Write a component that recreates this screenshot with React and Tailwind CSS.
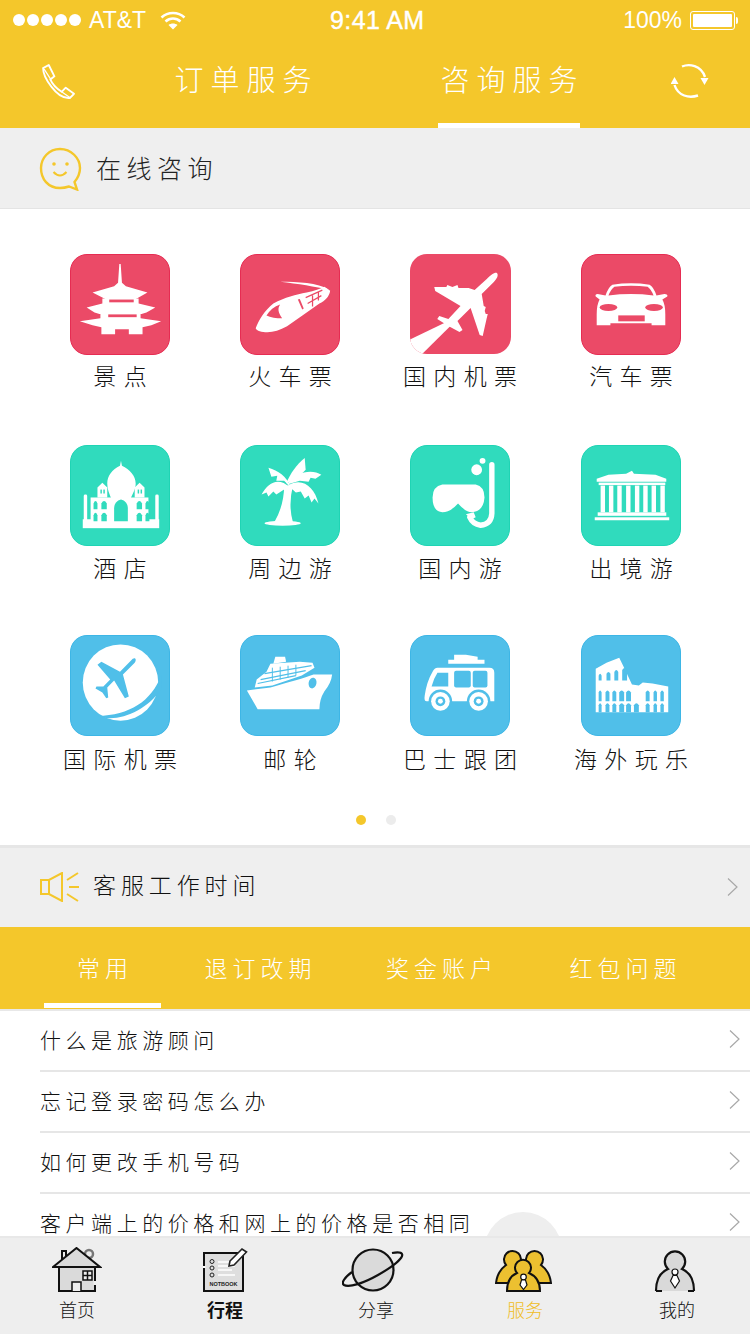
const FONT = '"Noto Sans CJK SC","Liberation Sans",sans-serif';

const Pagoda = () => (
  <g fill="#fff">
    <path d="M49.3 9h1.4L52 28l4 3.5L78 38l-9 5-3 1.5H35L32 43l-10-5 22-6.5 4-3.5z" />
    <path d="M32 44h37v5l17 4-9 5-5 1.5H29L24 58l-8-5 16-4z" />
    <path d="M30 59h41v5l21 3-10 4-9 2v7H59v-5H45v5H31v-7l-9-2-13-4 21-3z" />
    <rect x="39" y="45" width="25" height="2.8" fill="#eb4a67" />
    <rect x="38" y="60" width="29" height="2.8" fill="#eb4a67" />
  </g>
);
const Train = () => (
  <g>
    <path d="M15 74C18 66 24 56 33 49 45 43 56 40 67 38 75 36 81 34 85 32L91 36C90 42 86 46 80 49L67 58 47 72C40 76 33 78 27 78 21 78 16 77 15 74z" fill="#fff" />
    <path d="M40 27C58 27 78 28 90 35 76 32 58 29 40 27z" fill="#fff" />
    <path d="M26 61C29 56 34 52 40 50 37 54 38 58 42 64 36 64 30 63 26 61z" fill="#eb4a67" />
    <path d="M58 45L60 44.500 64 54 62.500 55z" fill="#eb4a67" />
    <path d="M66 43L83 35.500M68 49L82 41M73 41V52M79 38V46" stroke="#eb4a67" strokeWidth="1.300" fill="none" />
  </g>
);
const Plane = () => (
  <g fill="#fff">
    <path d="M-1 86L36 68 40 72 11 101H-1z" />
    <path d="M86 19C88 21 86 25 83 28L71 40 73 52 75 53 74 57 75 60 77 60 76 64 72 82 69 81 60 54 47 67 52 76 49 78 38 72 27 65 29 62 38 65 50 52 25 37 24 33 36 33 37 31 42 33 47 31 48 34 58 34 64 36 76 25C80 21 84 18 86 19z" />
  </g>
);
const Car = () => (
  <g>
    <path d="M31 30Q50 27 69 30Q73 32 76 41L84 39.500Q88 40 87 42L82 45Q85 50 85 60V71H71V69H29V71H15V60Q15 50 18 45L14 42Q13 40 16 39.500L24 41Q27 32 31 30Z" fill="#fff" />
    <path d="M33 32Q50 30 67 32Q71 35 73 41Q50 38 27 41Q29 35 33 32Z" fill="#eb4a67" />
    <ellipse cx="27" cy="53" rx="9" ry="3.500" fill="#eb4a67" />
    <ellipse cx="73.500" cy="53" rx="9" ry="3.500" fill="#eb4a67" />
    <rect x="37" y="61" width="27" height="6" fill="#eb4a67" />
  </g>
);
const Taj = () => {
  const T = '#30dbbd';
  return (
    <g>
      <g fill="#fff">
        <rect x="12" y="74" width="78" height="9" />
        <rect x="20" y="52" width="59" height="24" />
        <rect x="13" y="49" width="3.500" height="28" rx="1.500" />
        <rect x="86" y="49" width="3.500" height="28" rx="1.500" />
        <path d="M51 15L52 20C60 24 66 30 66 38 66 44 63 48 61 53H41C39 48 37 44 37 38 37 30 42 24 50 20z" />
        <path d="M32 37L37 42 37 52H27V42z" />
        <path d="M70 37L75 42 75 52H65V42z" />
      </g>
      <path d="M44 76V63C44 58 47 55 51 54 55 55 58 58 58 63V76z" fill={T} />
      {[
        [23, 4],
        [31, 5.500],
        [67, 5.500],
        [76, 4],
      ].map(([x, w]) => (
        <g key={x} fill={T}>
          <path d={`M${x} 64V58Q${x + w / 2} 53 ${x + w} 58V64z`} />
          <path d={`M${x} 76V70Q${x + w / 2} 65 ${x + w} 70V76z`} />
        </g>
      ))}
      <rect x="30" y="44" width="1.500" height="4" fill={T} />
      <rect x="33" y="44" width="1.500" height="4" fill={T} />
      <rect x="68" y="44" width="1.500" height="4" fill={T} />
      <rect x="71" y="44" width="1.500" height="4" fill={T} />
    </g>
  );
};
const Palm = () => (
  <g fill="#fff">
    <ellipse cx="42.500" cy="78" rx="18.500" ry="2.500" />
    <path d="M44 40Q44 60 34 77H53Q48 60 53 40z" />
    <path d="M50 42C38 31 28 37 21 49L26 47 28 51 33 46 36 49 44 44z" />
    <path d="M51 42C46 30 38 25 28 22L31 31 37 30 36 35 44 35z" />
    <path d="M46 38C50 28 57 18 65 12L66 24 58 32z" />
    <path d="M47 39C56 26 72 23 82 29L76 33 71 32 69 36 60 35z" />
    <path d="M48 40C62 31 75 41 79 58L75 53 72 57 69 50 65 53 61 46 56 47z" />
  </g>
);
const Snorkel = () => (
  <g>
    <path d="M32 39H66Q75 41 75 52 74 66 62 67 56 67 48 58 40 67 32 67 22 66 22 52 22 41 32 39Z" fill="#fff" />
    <path d="M82.500 19V68Q82 79 71 80 63 79 60 72" fill="none" stroke="#fff" strokeWidth="5.500" strokeLinecap="round" />
    <circle cx="67" cy="24" r="5.500" fill="#fff" />
    <circle cx="73" cy="15" r="3" fill="#fff" />
    <path d="M56 69L64 67 66 72 62 74z" fill="#fff" />
  </g>
);
const Parthenon = () => (
  <g fill="#fff">
    <path d="M15 33L27 29 45 28 51 25 53 28 75 29 86 33V36H15z" />
    <rect x="17" y="37" width="68" height="2.500" />
    {[19, 27.500, 36, 45, 54, 62.500, 71, 80].map((x) => (
      <rect key={x} x={x} y="40" width="4.500" height="27" />
    ))}
    <rect x="16" y="67" width="70" height="3.500" />
    <rect x="13" y="72" width="76" height="3" />
  </g>
);
const Globe = () => {
  const B = '#50bfe9';
  return (
    <g>
      <circle cx="50.500" cy="47" r="38.500" fill="#fff" />
      <path d="M92 40C82 66 60 80 27 81 48 88 76 76 92 54z" fill={B} />
      <path d="M63 23C66 21 67 24 65 27L53 39 59 61 55 63 44 45 37 52 38 62 36 63 32 57 25 53 26 51 33 51 40 44 27 29 31 26 50 36z" fill={B} />
    </g>
  );
};
const Ship = () => {
  const B = '#50bfe9';
  return (
    <g>
      <path d="M33 28L35 21H45L46 26z" fill="#fff" />
      <path d="M16 44L26 36 30 28 60 26 73 27 75 32 62 40 32 50 14 52z" fill="#fff" />
      <path d="M6 55L30 52Q60 44 74 39L93 39Q92 48 85 56 80 64 80 74H17z" fill="#fff" />
      <path d="M24 38L72 30M20 44L66 35M17 48L56 40" stroke={B} strokeWidth="1.200" fill="none" />
      <path d="M32 32V46M40 31V44M48 30V42M56 29V40" stroke={B} strokeWidth="1" fill="none" />
      <ellipse cx="73" cy="47.500" rx="4" ry="5.500" fill={B} transform="rotate(12 73 47.500)" />
    </g>
  );
};
const Bus = () => {
  const B = '#50bfe9';
  return (
    <g>
      <path d="M44 19H56L68 21V24H75V28H38V24H44z" fill="#fff" />
      <path d="M27 32H80Q85 32 85 37V66H16Q13 66 14 60 16 46 22 36 24 32 27 32z" fill="#fff" />
      <path d="M27 37H38V51H21Q23 43 27 37z" fill={B} />
      <rect x="44" y="35" width="17" height="17" rx="2" fill={B} />
      <rect x="63" y="35" width="15" height="17" rx="2" fill={B} />
      {[30, 69].map((x) => (
        <g key={x}>
          <circle cx={x} cy="66" r="12" fill={B} />
          <circle cx={x} cy="66" r="9.500" fill="#fff" />
          <circle cx={x} cy="66" r="5" fill={B} />
          <circle cx={x} cy="66" r="2.500" fill="#fff" />
        </g>
      ))}
    </g>
  );
};
const Colosseum = () => {
  const B = '#50bfe9';
  const rows = [
    [[17, 3], [25, 4], [33, 4], [41, 5]],
    [[17, 3], [24, 4], [31, 4], [38, 5], [45, 5], [65, 4], [73, 3.500], [80, 3.500]],
    [[17, 3], [24, 4], [31, 4], [38, 5], [45, 5], [53, 5], [65, 4], [73, 3.500], [80, 3.500]],
  ];
  const ys = [[45, 34], [66, 55], [77, 68]];
  return (
    <g>
      <path d="M14 33L25 27 38 22 42 30 51 49 58 50 62 47 72 48 88 51V77H14z" fill="#fff" />
      {rows.map((r, i) =>
        r.map(([x, w]) => {
          const [b, t] = ys[i];
          const top = i === 0 ? t + (46 - x) * 0.25 - 3 : t;
          return <path key={`${i}-${x}`} d={`M${x} ${b}V${top + 2}Q${x + w / 2} ${top - 2} ${x + w} ${top + 2}V${b}z`} fill={B} />;
        }),
      )}
    </g>
  );
};

const GROUPS = [
  {
    box: 'bg-[#eb4a67] border-[#e62c52]',
    label: 'mt-[5px]',
    items: [
      ['景点', Pagoda],
      ['火车票', Train],
      ['国内机票', Plane, true],
      ['汽车票', Car],
    ],
  },
  {
    box: 'bg-[#30dbbd] border-[#1fd4b4]',
    label: 'mt-[6px]',
    items: [
      ['酒店', Taj],
      ['周边游', Palm],
      ['国内游', Snorkel],
      ['出境游', Parthenon],
    ],
  },
  {
    box: 'bg-[#50bfe9] border-[#3db6e6]',
    label: 'mt-[7px]',
    items: [
      ['国际机票', Globe],
      ['邮轮', Ship],
      ['巴士跟团', Bus],
      ['海外玩乐', Colosseum],
    ],
  },
];

const Chevron = ({ className }) => (
  <svg className={className} width="13" height="20" viewBox="0 0 13 20" fill="none">
    <path d="M2 1.500L11 10 2 18.500" stroke="#a8a8a8" strokeWidth="1.200" />
  </svg>
);

const StatusBar = () => (
  <div className="h-10 flex items-center text-white relative" style={{ fontFamily: '"Liberation Sans",sans-serif' }}>
    <div className="ml-[13px] flex gap-[2px]">
      {[0, 1, 2, 3, 4].map((i) => (
        <span key={i} className="w-3 h-3 rounded-full bg-white" />
      ))}
    </div>
    <span className="ml-[8px] text-[23px] leading-none">AT&amp;T</span>
    <svg className="ml-[14px]" width="26" height="19" viewBox="0 0 26 19" fill="none" stroke="#fff" strokeWidth="2.600">
      <path d="M1.500 6.500C8 .5 18 .5 24.500 6.500" />
      <path d="M5.500 10.500C10 6.500 16 6.500 20.500 10.500" />
      <path d="M13 18.500L8.500 14C11 12 15 12 17.500 14z" fill="#fff" stroke="none" />
    </svg>
    <span className="absolute left-[330px] text-[25px] leading-none tracking-[0.400px] [-webkit-text-stroke:0.4px_white]">9:41 AM</span>
    <span className="ml-auto text-[23px] leading-none">100%</span>
    <div className="ml-[8px] mr-[15px] w-[45px] h-[19px] border border-white rounded-[3px] p-[2px] flex relative">
      <span className="flex-1 bg-white rounded-[1px]" />
      <span className="absolute -right-[4px] top-[5px] w-[2px] h-[7px] bg-white rounded-r-sm" />
    </div>
  </div>
);

const TopTab = ({ text, active, className }) => (
  <div className={`${className} w-[142px] h-[88px] pb-[6px] flex items-center justify-center border-b-[5px] ${active ? 'border-white' : 'border-transparent'}`}>
    <span className="text-[29px] leading-none tracking-[7px] pl-[7px] font-light text-white whitespace-nowrap">{text}</span>
  </div>
);

const Header = () => (
  <div className="bg-[#f4c72b] h-32">
    <StatusBar />
    <div className="flex items-start pl-[40px]">
      <svg className="mt-[24px]" width="35" height="35" viewBox="0 0 34 34" fill="none" stroke="#fff" strokeWidth="1.800" strokeLinejoin="round">
        <path d="M3 4L8.500 1 14 12 10 15Q13 22 21 27L25 23 33 29 29 33Q20 34 11 22 3 12 3 4Z" />
        <path d="M10.500 15L4 5M21 27L29 32.500" strokeWidth="1.200" />
      </svg>
      <TopTab text="订单服务" className="ml-[97px]" />
      <TopTab text="咨询服务" active className="ml-[124px]" />
      <svg className="ml-[91px] mt-[23px]" width="38" height="36" viewBox="0 0 38 36" fill="none" stroke="#fff" strokeWidth="2.400">
        <path d="M11 3.500C18 .5 30 2 34 14" />
        <path d="M27 32.500C18 35.500 7 33 3.500 22" />
        <path d="M29.500 15H37.500L33.500 22z" fill="#fff" stroke="none" />
        <path d="M-.5 21H7.500L3.500 14z" fill="#fff" stroke="none" />
      </svg>
    </div>
  </div>
);

export default function App() {
  return (
    <div className="relative w-[750px] h-[1334px] overflow-hidden bg-white" style={{ fontFamily: FONT }}>
      <Header />

      <div className="h-[81px] bg-[#efefef] border-b border-[#e4e4e4] flex items-center pl-[39px]">
        <svg className="mb-[-2px]" width="43" height="44" viewBox="0 0 43 44" fill="none" stroke="#f4c72b" strokeWidth="2.400">
          <path d="M21 2C32 2 41 11 41 21 41 28 38 32 35.500 35L38 42.500 30 39.500C27 40.500 24 41 21 41 9 41 2 32 2 21 2 11 10 2 21 2Z" />
          <circle cx="15" cy="17" r="1.800" fill="#f4c72b" stroke="none" />
          <circle cx="28" cy="17" r="1.800" fill="#f4c72b" stroke="none" />
          <path d="M14.500 25Q21 32 27.500 25" strokeWidth="2" />
        </svg>
        <span className="ml-[14px] mb-[2px] text-[25px] leading-none tracking-[5.500px] font-light text-[#222]">在线咨询</span>
      </div>

      <div className="h-[636px] pt-[45px] flex flex-col">
        <div className="px-[35px] grid grid-cols-[170px_170px_170px_172px] grid-rows-[191px_190px_180px]">
          {GROUPS.map((g) =>
            g.items.map(([label, Icon, bare]) => (
              <div key={label} className="flex flex-col items-center">
                <svg className={`rounded-[17px] shrink-0 overflow-hidden ${g.box} ${bare ? 'w-[101px] h-[100px] mb-[1px]' : 'w-[100px] h-[101px] border'}`} viewBox="0 0 100 100" preserveAspectRatio="none">
                  <Icon />
                </svg>
                <span className={`${g.label} text-[23px] leading-[30px] tracking-[7.300px] pl-[7.300px] font-light text-[#111] whitespace-nowrap`}>{label}</span>
              </div>
            )),
          )}
        </div>
        <div className="ml-[356px] flex gap-5">
          <span className="w-[10px] h-[10px] rounded-full bg-[#f4c72b]" />
          <span className="w-[10px] h-[10px] rounded-full bg-[#ececec]" />
        </div>
      </div>

      <div className="h-[82px] bg-[#efefef] border-t-[3px] border-[#e6e6e6] flex items-center pl-[40px] pr-[11px]">
        <svg className="mb-[2px]" width="40" height="30" viewBox="0 0 40 30" fill="none" stroke="#f4c72b" strokeWidth="2">
          <path d="M1 8H9L22 1V29L9 22H1zM9 8V22" />
          <path d="M27 8L38 1M29 15H39M27 22L38 29" />
        </svg>
        <span className="ml-[13px] mb-[7px] text-[23px] leading-none tracking-[4.900px] font-light text-[#111]">客服工作时间</span>
        <Chevron className="ml-auto mb-[2px]" />
      </div>

      <div className="h-[82px] bg-[#f4c72b] flex pl-[44px] text-white">
        {[
          ['常用', 'w-[117px] border-white'],
          ['退订改期', 'w-[117px] ml-[38.500px] border-transparent'],
          ['奖金账户', 'w-[117px] ml-[64.500px] border-transparent'],
          ['红包问题', 'w-[117px] ml-[66.500px] border-transparent'],
        ].map(([t, box]) => (
          <div key={t} className={`${box} h-[81px] border-b-[5px] pt-[5px] flex items-center justify-center whitespace-nowrap`}>
            <span className="text-[23px] leading-none font-light tracking-[5px] pl-[5px]">{t}</span>
          </div>
        ))}
      </div>

      <div className="border-t-2 border-[#e8e8e8]">
        {['什么是旅游顾问', '忘记登录密码怎么办', '如何更改手机号码', '客户端上的价格和网上的价格是否相同'].map((t) => (
          <div key={t} className="ml-[40px] h-[61px] border-b-2 border-[#e6e6e6] flex items-center pr-[9px]">
            <span className="mb-[2px] text-[21px] leading-none tracking-[4.550px] font-light text-[#111] whitespace-nowrap">{t}</span>
            <Chevron className="ml-auto mb-[4px]" />
          </div>
        ))}
      </div>

      <div className="absolute left-[484px] top-[1212px] w-[78px] h-[78px] rounded-full bg-[#eeeeee]" />

      <div className="absolute left-0 bottom-0 w-[750px] h-[98px] bg-[#eeeeee] border-t-2 border-[#e8e8e8] grid grid-cols-[154px_142px_160px_138px_166px]">
        <NavItem label="首页">
          <svg width="50" height="46" viewBox="-1 -1 50 46" fill="none" stroke="#111" strokeWidth="2">
            <circle cx="36" cy="6" r="4" stroke="#777" strokeWidth="2.500" />
            <path d="M9 12V3H13V8" fill="#eee" />
            <path d="M6 19H42V43H6z" fill="#dadada" />
            <path d="M0 19L23.500 0 47 19z" fill="#dadada" />
            <path d="M30 23H39V32H30zM34.500 23V32M30 27.500H39M19 43V34H28V43" strokeWidth="1.500" fill="#eee" />
            <rect x="40.500" y="33" width="3" height="4" fill="#eee" stroke="none" />
          </svg>
        </NavItem>
        <NavItem label="行程" bold>
          <svg width="46" height="46" viewBox="-1 -1 46 46" fill="none">
            <path d="M1 5H40V43H1z" fill="#dedede" stroke="#111" strokeWidth="2" />
            <path d="M0 19H2.500" stroke="#fff" strokeWidth="2" />
            <circle cx="9" cy="13.500" r="2" stroke="#222" strokeWidth="1" />
            <circle cx="9" cy="20" r="2" stroke="#222" strokeWidth="1" />
            <circle cx="9" cy="27" r="2" stroke="#222" strokeWidth="1" />
            <path d="M15 14H26M15 18H32M15 22H29M15 27H32" stroke="#fff" strokeWidth="1.300" />
            <path d="M27 13L39 1 43.500 4 31 17 26 18z" fill="#fff" stroke="#222" strokeWidth="1.600" />
            <text x="20.500" y="37.500" textAnchor="middle" fontSize="5.500" fontWeight="700" fill="#222" fontFamily="Liberation Sans">NOTBOOK</text>
          </svg>
        </NavItem>
        <NavItem label="分享">
          <svg className="mr-[6px]" width="62" height="44" viewBox="0 0 62 44" fill="none" stroke="#111" strokeWidth="2.200">
            <circle cx="31" cy="22" r="20.500" fill="#dadada" />
            <path d="M10 24C2 30-1 35 2 37 7 40 22 35 36 27 50 19 62 10 60 6 59 4 55 4 50 5" />
          </svg>
        </NavItem>
        <NavItem label="服务" active>
          <svg className="mr-[3px]" width="57" height="45" viewBox="0 0 57 45" stroke="#111" strokeWidth="2" fill="#ecc030">
            <path d="M1 35C2 26 7 20 11 17A8.500 8.500 0 1 1 24 17L30 32 24 35z" />
            <path d="M56 35C55 26 50 20 46 17A8.500 8.500 0 1 0 33 17L27 32 34 35z" />
            <path d="M12 43C12 34 15 28 22 25A8 8 0 1 1 34 25C41 28 45 34 45 43z" />
            <circle cx="28.500" cy="29" r="2.800" fill="#fff" strokeWidth="1.200" />
            <path d="M26.500 32H30.500L32 37 28.500 41.500 25 37z" fill="#fff" strokeWidth="1.200" />
          </svg>
        </NavItem>
        <NavItem label="我的">
          <svg className="mr-[4px]" width="42" height="45" viewBox="-1 0 42 45" stroke="#111" strokeWidth="2.200" fill="#d9d9d9">
            <path d="M1 43C1 31 6 24 13 21A10.200 10.200 0 1 1 27 21C34 24 39 31 39 43" />
            <path d="M1 43H7M33 43H39" fill="none" />
            <circle cx="20" cy="24" r="3" fill="#fff" strokeWidth="1.200" />
            <path d="M18 27.500H22L24.500 33 20 40 15.500 33z" fill="#fff" strokeWidth="1.200" />
          </svg>
        </NavItem>
      </div>
    </div>
  );
}

function NavItem({ label, children, active, bold }) {
  return (
    <div className="flex flex-col items-center pt-[9px]">
      <div className="h-[46px] flex items-center">{children}</div>
      <span className={`mt-[4px] text-[18px] leading-[24px] ${active ? 'text-[#f0bd25] font-light' : 'text-[#111]'} ${bold ? 'font-bold' : 'font-light'}`}>{label}</span>
    </div>
  );
}
